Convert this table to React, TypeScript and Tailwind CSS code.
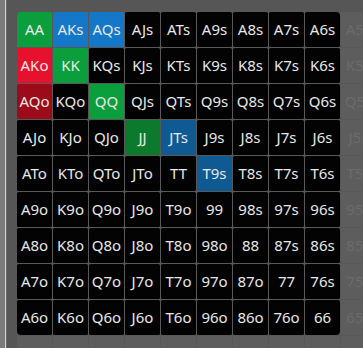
import React from "react";

const RANKS = ["A", "K", "Q", "J", "T", "9", "8", "7", "6", "5", "4", "3", "2"];
const N_ACTIVE = 9;
const N_SHOW = 11;

const COLORS: Record<string, string> = {
  AA: "bg-[#0a9e3c]",
  KK: "bg-[#0a9e3c]",
  QQ: "bg-[#0a9e3c]",
  JJ: "bg-[#0b7a2c]",
  AKs: "bg-[#1477c7]",
  AQs: "bg-[#1477c7]",
  AKo: "bg-[#e8112d]",
  AQo: "bg-[#9c0b19]",
  JTs: "bg-[#0f5a93]",
  T9s: "bg-[#0f5a93]",
};

function hand(i: number, j: number) {
  if (i === j) return RANKS[i] + RANKS[j];
  if (j > i) return RANKS[i] + RANKS[j] + "s";
  return RANKS[j] + RANKS[i] + "o";
}

function cornerClass(i: number, j: number) {
  const last = N_ACTIVE - 1;
  if (i === 0 && j === 0) return "rounded-tl-[4px]";
  if (i === 0 && j === last) return "rounded-tr-[4px]";
  if (i === last && j === 0) return "rounded-bl-[4px]";
  if (i === last && j === last) return "rounded-br-[4px]";
  return "";
}

export default function App() {
  const rows = [];
  for (let i = 0; i < N_SHOW; i++) {
    for (let j = 0; j < N_SHOW; j++) {
      const h = hand(i, j);
      const active = i < N_ACTIVE && j < N_ACTIVE;
      if (active) {
        rows.push(
          <div
            key={h}
            className={`flex items-center justify-center rounded-[1.5px] text-[15px] text-[#e8e8e8] ${
              COLORS[h] ?? "bg-[#030303]"
            } ${cornerClass(i, j)}`}
          >
            {h}
          </div>
        );
      } else {
        rows.push(
          <div
            key={h}
            className="flex items-center justify-center bg-[#5d5d5d] text-[15px] text-[#6b6b6b]"
          >
            {h}
          </div>
        );
      }
    }
  }

  return (
    <div
      className="flex h-[348px] w-[363px] overflow-hidden bg-[#565656]"
      style={{ fontFamily: '"Noto Sans", "Liberation Sans", sans-serif' }}
    >
      <div className="h-full w-[5px] shrink-0 bg-[#7b7b7b]" />
      <div className="h-full w-px shrink-0 bg-[#d6d6d6]" />
      <div className="h-full w-px shrink-0 bg-[#666666]" />
      <div className="relative flex-1 overflow-hidden pl-[10px] pt-[12px]">
        <div className="grid w-max grid-cols-[repeat(11,35px)] grid-rows-[repeat(11,35px)] gap-px bg-[#585858]">
          {rows}
        </div>
      </div>
    </div>
  );
}
